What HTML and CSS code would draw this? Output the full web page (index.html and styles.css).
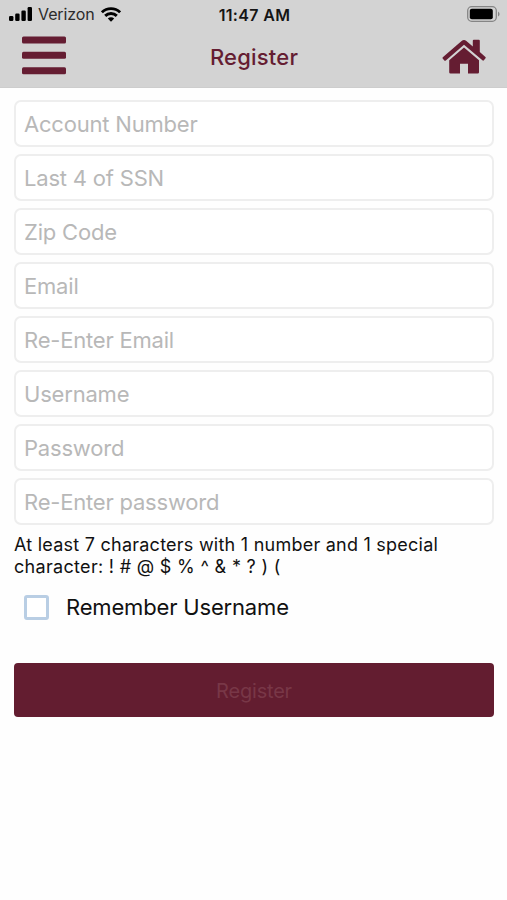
FILE: index.html
```html
<!DOCTYPE html>
<html lang="en">
<head>
<meta charset="utf-8">
<meta name="viewport" content="width=device-width, initial-scale=1">
<title>Register</title>
<link rel="stylesheet" href="styles.css">
</head>
<body>
<header class="top">
  <div class="status">
    <div class="carrier">
      <svg class="signal" width="23" height="14" viewBox="0 0 23 14"><rect x="0" y="9" width="4.4" height="5" rx="1.2"/><rect x="6.2" y="6.5" width="4.4" height="7.5" rx="1.2"/><rect x="12.4" y="3.5" width="4.4" height="10.5" rx="1.2"/><rect x="18.6" y="0" width="4.4" height="14" rx="1.2"/></svg>
      <span class="carrier-name">Verizon</span>
      <svg class="wifi" width="20" height="15" viewBox="0 0 20 15"><g fill="none" stroke="#000" stroke-width="2.9"><path d="M.9 5.3a13 13 0 0 1 18.2 0"/><path d="M4.2 8.9a8.3 8.3 0 0 1 11.6 0"/></g><path d="M6.8 11.5a4.6 4.6 0 0 1 6.4 0L10 14.8z"/></svg>
    </div>
    <span class="clock">11:47 AM</span>
    <svg class="battery" width="33" height="16" viewBox="0 0 33 16"><rect x=".7" y=".7" width="28.6" height="14.6" rx="4" fill="none" stroke="#858585" stroke-width="1.3"/><rect x="2.8" y="2.8" width="23" height="10.4" rx="2"/><path d="M31 5.5q1.6 1 1.6 2.5T31 10.5z" fill="#858585"/></svg>
  </div>
  <nav class="bar">
    <svg class="menu" width="44" height="39" viewBox="0 0 44 39"><rect y=".5" width="44" height="7" rx="1.5"/><rect y="15.8" width="44" height="7" rx="1.5"/><rect y="31.2" width="44" height="7" rx="1.5"/></svg>
    <h1 class="title">Register</h1>
    <svg class="home" width="44" height="35" viewBox="0 0 44 35"><path d="M.8 18.2 19.6 2.1q2.4-2 4.8 0l6.4 5.4V1.8q0-1 1-1h5q1 0 1 1v11.3l5.6 4.8q.7.7.1 1.4l-1.6 1.9q-.7.8-1.5.1L22 5.8 3.8 21.5q-.9.6-1.5-.1L.7 19.6q-.6-.7.1-1.4z"/><path d="M22 8.4 37 21.2v12q0 1.3-1.3 1.3H26v-9.8h-8v9.8H8.5q-1.3 0-1.3-1.3v-12z"/></svg>
  </nav>
</header>
<form class="form">
  <div class="fields">
    <input class="field" type="text" placeholder="Account Number">
    <input class="field" type="text" placeholder="Last 4 of SSN">
    <input class="field" type="text" placeholder="Zip Code">
    <input class="field" type="text" placeholder="Email">
    <input class="field" type="text" placeholder="Re-Enter Email">
    <input class="field" type="text" placeholder="Username">
    <input class="field" type="password" placeholder="Password">
    <input class="field" type="password" placeholder="Re-Enter password">
  </div>
  <p class="hint">At least 7 characters with 1 number and 1 special<br><span class="symbols">character: ! # @ $ % ^ &amp; * ? ) (</span></p>
  <label class="remember"><input class="check" type="checkbox"><span class="remember-text">Remember Username</span></label>
  <button class="submit" type="button" disabled>Register</button>
</form>
</body>
</html>
```
FILE: styles.css
```css
* { box-sizing: border-box; }
body {
  margin: 0;
  background: #fefefe;
  color: #111;
  font-family: Inter, "Liberation Sans", sans-serif;
}
.top {
  height: 88px;
  background: #d3d3d3;
  border-bottom: 1px solid #cdcdcd;
}
.status {
  display: grid;
  grid-template-columns: 1fr auto 1fr;
  height: 30px;
  padding: 0 7px 0 9px;
  align-items: center;
}
.carrier { display: flex; align-items: center; height: 28px; margin-bottom: 2px; }
.carrier-name {
  margin: 0 6px 0 6px;
  font-size: 16px;
  line-height: 20px;
  letter-spacing: -0.1px;
  color: #2b2b2b;
}
.clock {
  margin-bottom: 1px;
  font-size: 16px;
  line-height: 20px;
  font-weight: 600;
  letter-spacing: 0.35px;
  color: #151515;
}
.battery { justify-self: end; margin-top: -2px; }
.bar {
  display: grid;
  grid-template-columns: 1fr auto 1fr;
  height: 52px;
  padding: 0 21px 0 22px;
  align-items: center;
}
.menu, .home { fill: #651d32; }
.menu { margin-top: -1px; }
.home { justify-self: end; }
.title {
  margin: 1px 0 0;
  font-size: 22px;
  line-height: 28px;
  font-weight: 550;
  letter-spacing: 0.2px;
  color: #651d32;
}
.form { padding: 12px 13px 0 14px; }
.fields { display: flex; flex-direction: column; gap: 7px; }
.field {
  width: 100%;
  height: 47px;
  padding: 0 8px;
  border: 2px solid #eeeeee;
  border-radius: 7px;
  background: #fff;
  font: 22px/28px Inter, "Liberation Sans", sans-serif;
  letter-spacing: -0.2px;
}
.field::placeholder { color: #b8b8b8; opacity: 1; }
.hint {
  margin: 9px 0 0;
  font-size: 18px;
  line-height: 22px;
  letter-spacing: 0.24px;
  white-space: nowrap;
}
.symbols { letter-spacing: 0.31px; }
.remember {
  display: flex;
  align-items: center;
  height: 30px;
  margin-top: 14px;
  padding-left: 10px;
}
.check {
  appearance: none;
  width: 25px;
  height: 25px;
  margin: 0 17px 0 0;
  border: 3px solid #b9cee4;
  border-radius: 3px;
  background: #fff;
}
.remember-text { font-size: 22px; line-height: 28px; letter-spacing: -0.17px; color: #111; }
.submit {
  display: block;
  width: 100%;
  height: 54px;
  margin-top: 41px;
  padding: 1px 0 0;
  border: 0;
  border-radius: 4px;
  background: #631d30;
  color: #783747;
  font: 20px/26px Inter, "Liberation Sans", sans-serif;
  letter-spacing: -0.2px;
}
```
